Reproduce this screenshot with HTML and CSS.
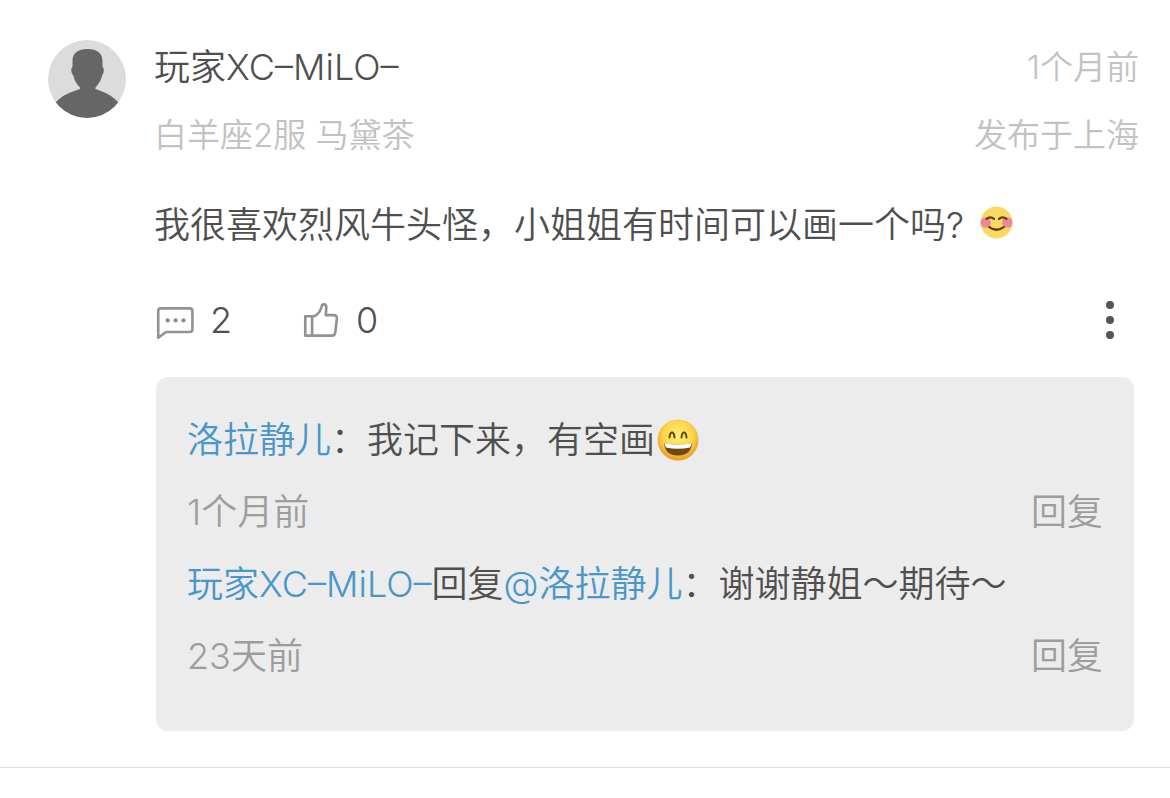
FILE: index.html
```html
<!DOCTYPE html>
<html lang="zh-CN">
<head>
<meta charset="utf-8">
<meta name="viewport" content="width=device-width, initial-scale=1">
<title>评论</title>
<link rel="stylesheet" href="styles.css">
</head>
<body>
<article class="comment">
  <svg class="avatar" viewBox="0 0 78 78" role="img" aria-label="头像">
    <defs><clipPath id="disc"><circle cx="39" cy="39" r="39"/></clipPath></defs>
    <circle cx="39" cy="39" r="39" fill="#dcdcdc"/>
    <path clip-path="url(#disc)" fill="#666" d="M39.500 9C49 9 54.500 13 54.500 21V27C56.500 28.500 56 33 54 36C53 41 50 44.500 47.500 47.500V49C57 52 64 55.500 70 62V80H8V62C14 55.500 22 52 32 49V47.500C29 44.500 26.500 41 25.500 36C23 33 22.500 28.500 24.500 27V21C24.500 13 30 9 39.500 9Z"/>
  </svg>
  <div class="main">
    <header class="head">
      <div class="row name-row">
        <span class="name">玩家XC–MiLO–</span>
        <time class="meta">1个月前</time>
      </div>
      <div class="row meta">
        <span>白羊座2服 马黛茶</span>
        <span>发布于上海</span>
      </div>
    </header>
    <p class="text">我很喜欢烈风牛头怪，小姐姐有时间可以画一个吗?
      <svg class="blush" viewBox="0 0 32 32" role="img" aria-label="微笑">
        <circle cx="16" cy="16" r="15.500" fill="#f8da62"/>
        <circle cx="5.500" cy="16" r="5" fill="#f0849a"/>
        <circle cx="26.500" cy="16" r="5" fill="#f0849a"/>
        <path d="M6.500 12.500Q10 9.500 13.500 12.500M18.500 12.500Q22 9.500 25.500 12.500M9 20.500Q16 25.500 23 20.500" fill="none" stroke="#5c3d12" stroke-width="2.200" stroke-linecap="round"/>
      </svg>
    </p>
    <div class="actions">
      <button class="action" type="button" aria-label="评论 2">
        <svg class="icon" viewBox="0 0 38 38" fill="none" stroke="#929292" stroke-width="2.500" stroke-linejoin="round">
          <path d="M4 8.500Q4 6 6.500 6H34Q36.500 6 36.500 8.500V26Q36.500 28.500 34 28.500H11.500L4 34Z"/>
          <g fill="#8b8b8b" stroke="none"><circle cx="13" cy="17.500" r="2"/><circle cx="20.500" cy="17.500" r="2"/><circle cx="28" cy="17.500" r="2"/></g>
        </svg>
        <span>2</span>
      </button>
      <button class="action" type="button" aria-label="赞 0">
        <svg class="icon" viewBox="0 0 38 38" fill="none" stroke="#929292" stroke-width="2.500" stroke-linejoin="round">
          <path d="M5 13.500H13.500C17 12 19.500 8 20.500 4.500C21 1.500 25 1.500 25 5L24.500 12.500H32Q35.500 12.500 35 16L33.500 29Q33 32 30.500 32H5ZM11.500 13.500V32"/>
        </svg>
        <span>0</span>
      </button>
      <button class="more" type="button" aria-label="更多">
        <svg class="dots" viewBox="0 0 8 38" fill="#555"><circle cx="4" cy="4" r="4"/><circle cx="4" cy="19" r="4"/><circle cx="4" cy="34" r="4"/></svg>
      </button>
    </div>
    <section class="replies">
      <p class="reply"><a href="#lora">洛拉静儿</a>：我记下来，有空画<svg class="grin" viewBox="0 0 42 42" role="img" aria-label="大笑">
        <defs><radialGradient id="face" cx=".5" cy=".4" r=".6"><stop offset="0" stop-color="#fff176"/><stop offset=".6" stop-color="#fdd64b"/><stop offset="1" stop-color="#e59a26"/></radialGradient></defs>
        <circle cx="21" cy="21" r="20.500" fill="url(#face)"/>
        <path d="M12.500 18.500Q13 13.500 15 13.500T17.500 18.500M24.500 18.500Q25 13.500 27 13.500T29.500 18.500" fill="none" stroke="#65400f" stroke-width="2" stroke-linecap="round"/>
        <path d="M7 24Q21 27 35 24Q34 36.500 21 36.500T7 24Z" fill="#76460f"/>
        <path d="M7.500 24Q21 27 34.500 24Q34.500 26.500 33 28.500Q21 31 9 28.500Q7.500 26.500 7.500 24Z" fill="#fff"/>
      </svg></p>
      <div class="row reply-meta"><time>1个月前</time><button type="button">回复</button></div>
      <p class="reply"><a href="#milo">玩家XC–MiLO–</a>回复<a href="#lora">@洛拉静儿</a>：谢谢静姐～期待～</p>
      <div class="row reply-meta"><time>23天前</time><button type="button">回复</button></div>
    </section>
  </div>
</article>
</body>
</html>
```
FILE: styles.css
```css
* { box-sizing: border-box; }

body {
  margin: 0;
  background: #fff;
  color: #4f4f4f;
  font-family: Inter, "Noto Sans CJK SC", sans-serif;
  font-size: 36px;
  font-weight: 350;
  line-height: 72px;
}

p { margin: 0; }

a { color: #4896ca; text-decoration: none; }

button {
  padding: 0;
  border: 0;
  background: none;
  color: inherit;
  font: inherit;
  cursor: pointer;
}

svg { flex: none; }

.comment {
  display: flex;
  gap: 28px;
  padding: 33px 31px 36px 48px;
  border-bottom: 1px solid #dedede;
}

.avatar { width: 78px; height: 78px; margin-top: 7px; }

.main { flex: 1; min-width: 0; }

.row { display: flex; justify-content: space-between; }

.head { line-height: 68px; }

.meta { color: #c2c2c2; font-size: 33px; }

.text { margin-top: 20px; }

.blush { width: 33px; height: 33px; margin-left: 6px; vertical-align: -1px; }

.actions {
  display: flex;
  align-items: center;
  gap: 68px;
  margin-top: 23px;
}

.action { display: flex; align-items: center; gap: 16px; }

.icon { width: 40px; height: 40px; margin-top: 4px; }

.more { display: flex; margin-left: auto; padding: 0 25px; }

.dots { width: 8px; height: 38px; }

.replies {
  margin: 21px 5px 0 2px;
  padding: 27px 31px 39px;
  border-radius: 12px;
  background: #ececec;
}

.grin { width: 42px; height: 42px; margin-left: 2px; vertical-align: -8px; }

.reply-meta { color: #9d9d9d; }
```
